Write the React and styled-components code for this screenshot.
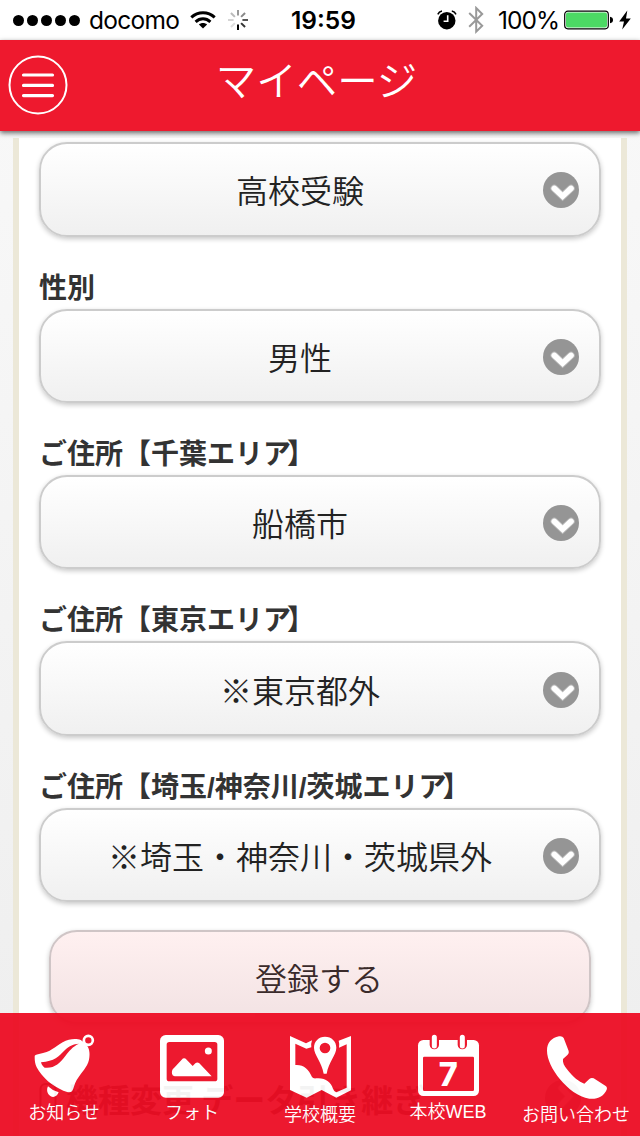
import React from 'react';
import styled, { createGlobalStyle } from 'styled-components';

const GlobalStyle = createGlobalStyle`
  * { box-sizing: border-box; }
  body { margin: 0; background: #fff; }
`;

const jp = `"Noto Sans CJK JP", sans-serif`;

const Screen = styled.div`
  position: relative;
  display: flex;
  flex-direction: column;
  width: 640px;
  height: 1136px;
  overflow: hidden;
  font-family: ${jp};
  background: linear-gradient(#f9f9f9, #eee);
`;

const StatusBar = styled.div`
  display: grid;
  grid-template-columns: 291px 66px 1fr;
  align-items: center;
  height: 40px;
  flex: none;
  background: #fff;
  color: #000;
  font: 400 24.5px/40px Inter, sans-serif;
`;
const StatusGroup = styled.div`
  display: flex;
  align-items: center;
  height: 40px;
  padding-left: ${(p) => p.$inset || 0}px;
  svg { flex: none; display: block; }
`;
const Dots = styled.div`
  display: flex;
  gap: 3px;
  margin: 1px 9px 0 13px;
`;
const Dot = styled.i`
  width: 11px;
  height: 11px;
  border-radius: 50%;
  background: #000;
`;
const StatusText = styled.span`
  width: ${(p) => p.$w}px;
  flex: none;
  white-space: nowrap;
  letter-spacing: ${(p) => p.$ls || 0}px;
  font-weight: ${(p) => p.$weight || 400};
`;
const Gap = styled.span`
  flex: none;
  width: ${(p) => p.$w}px;
`;

const Header = styled.header`
  position: relative;
  z-index: 1;
  display: grid;
  grid-template-columns: 60px 1fr 60px;
  height: 91px;
  flex: none;
  padding: 0 8px;
  background: #ee192e;
  box-shadow: 0 2px 5px rgba(0, 0, 0, 0.6);
`;
const MenuButton = styled.button`
  width: 60px;
  height: 60px;
  margin-top: 15px;
  padding: 0;
  border: 0;
  background: none;
  svg { display: block; }
`;
const Title = styled.h1`
  margin: 0;
  color: #fff;
  font-size: 40.5px;
  font-weight: 350;
  line-height: 78px;
  text-align: center;
  padding-right: 7px;
`;

const Panel = styled.main`
  flex: 1;
  margin: 7px 13px 0;
  padding: 4.2px 20px 0;
  border: solid #ece8d8;
  border-width: 0 6px;
  background: #fff;
`;
const Label = styled.label`
  display: block;
  height: 40px;
  margin-top: 32px;
  color: #333;
  font-size: 28px;
  font-weight: 700;
  line-height: 34px;
  white-space: nowrap;
`;
const Slash = styled.span`
  font-family: "Liberation Sans", sans-serif;
`;
const Close = styled.span`
  margin-left: -4px;
`;
const Select = styled.div`
  display: grid;
  grid-template-columns: 1fr 36px;
  align-items: center;
  height: 94.4px;
  padding: 0 20px 0 0;
  border: 2px solid #ccc;
  border-radius: 28px;
  background: linear-gradient(#fff, #f0f0f0);
  box-shadow: 0 2px 5px rgba(0, 0, 0, 0.22);
  svg { display: block; margin-top: 2px; }
`;
const Value = styled.span`
  padding-left: 16px;
  color: #222;
  font-size: 32px;
  font-weight: 350;
  line-height: 48px;
  text-align: center;
  white-space: nowrap;
  text-shadow: 0 2px 0 #f3f3f3;
`;
const Submit = styled.button`
  display: block;
  width: 542px;
  height: 94px;
  margin: 28px 10px 0;
  padding: 0 2px 0 0;
  border: 2px solid #cfc5c6;
  border-radius: 28px;
  background: linear-gradient(#fff0f0, #f2e2e3);
  box-shadow: 0 2px 5px rgba(0, 0, 0, 0.22);
  color: #3a2a2a;
  font: 350 32px/48px ${jp};
`;
const TransferRow = styled.div`
  display: grid;
  grid-template-columns: 27px 1fr 36px;
  align-items: center;
  margin-top: 50px;
  padding-right: 20px;
  height: 48px;
  color: #333;
  font-size: 32px;
  font-weight: 700;
  line-height: 48px;
  white-space: nowrap;
  svg { display: block; }
`;

const TabBar = styled.nav`
  position: absolute;
  left: 0;
  right: 0;
  bottom: 0;
  z-index: 2;
  display: grid;
  grid-template-columns: repeat(5, 128px);
  height: 123px;
  background: #ed0c23;
  opacity: 0.945;
`;
const Tab = styled.a`
  display: flex;
  flex-direction: column;
  align-items: center;
  color: #fff;
  svg { display: block; flex: none; }
`;
const TabLabel = styled.span`
  margin-top: ${(p) => p.$drop || 0}px;
  font-size: 18px;
  font-weight: 350;
  line-height: 22px;
  font-family: ${(p) => (p.$latin ? `"Liberation Sans", ${jp}` : jp)};
  white-space: nowrap;
`;

const Chevron = ({ right }) => (
  <svg width="36" height="36" viewBox="0 0 36 36">
    <circle cx="18" cy="18" r="18" fill="#959595" />
    <g fill="none" stroke="#fff" strokeLinecap="round" transform={right ? 'rotate(-90 18 18)' : undefined}>
      <path d="M11.3 16.4 19.6 24.2 28 16.4" strokeWidth="7.4" strokeOpacity=".35" />
      <path d="M11.3 16.4 19.6 24.2 28 16.4" strokeWidth="5.6" />
    </g>
  </svg>
);

const Wifi = () => (
  <svg width="26" height="18" viewBox="0 0 26 18">
    <g fill="none" stroke="#000" strokeWidth="3">
      <path d="M1.3 6.3C8 .1 18 .1 24.7 6.3" />
      <path d="M5.6 10.8C10 6.8 16 6.8 20.4 10.8" />
    </g>
    <path d="M13 17.4 8.9 13.4C11.2 11.4 14.8 11.4 17.1 13.4Z" />
  </svg>
);
const shades = ['#999', '#888', '#555', '#333', '#000', '#ddd', '#d5d5d5', '#bbb'];
const Spinner = () => (
  <svg width="20" height="20" viewBox="0 0 20 20">
    {shades.map((shade, i) => (
      <path key={i} d="M10 0V5.6" stroke={shade} strokeWidth="2" transform={`rotate(${i * 45} 10 10)`} />
    ))}
  </svg>
);
const Alarm = () => (
  <svg width="20" height="20" viewBox="0 0 20 20">
    <circle cx="9.8" cy="10.7" r="8.7" />
    <path d="M.8 4.4Q2 1.6 5 1M19 4.4Q17.8 1.6 14.8 1" fill="none" stroke="#000" strokeWidth="1.5" />
    <path d="M10.7 5.2V11.3H6.6" fill="none" stroke="#fff" strokeWidth="1.6" />
  </svg>
);
const Bluetooth = () => (
  <svg width="17" height="28" viewBox="0 0 17 28">
    <path d="M1.2 7 14.2 19.7 8.2 25.6V2L14.2 8 1.2 20.8" fill="none" stroke="#999" strokeWidth="2" />
  </svg>
);
const Battery = () => (
  <svg width="50" height="20" viewBox="0 0 50 20">
    <rect x=".7" y="1.2" width="43.6" height="17.6" rx="3.2" fill="#fff" stroke="#000" strokeWidth="1.2" />
    <rect x="2" y="2.6" width="41" height="14.8" rx="1.8" fill="#4cd964" />
    <path d="M46 6.7Q49 7.3 49 10T46 13.3Z" />
  </svg>
);
const Bolt = () => (
  <svg width="12" height="20" viewBox="0 0 12 20">
    <path d="M8.3 .6 .2 11.4H5L3.2 19.6 11.8 8.4H7Z" />
  </svg>
);

const TabIcon = ({ x, children }) => (
  <svg width="128" height="87" viewBox={`${x} 39 384 261`} fill="#fff">
    {children}
  </svg>
);
const RED = '#ed0c23';
const Bell = () => (
  <TabIcon x={0}>
    <circle cx="265" cy="121" r="13.5" fill="none" stroke="#fff" strokeWidth="8" />
    <path d="M104 171C103 165 108 164 117 162C153 157 164 140 188 127C207 116 229 115 242 120L256 130C268 143 271 159 267 179C262 201 245 216 230 240C222 254 222 265 216 274C210 279 200 276 190 272C155 257 127 233 110 202C105 192 104 182 104 171Z" />
    <path d="M123 187C164 184 176 169 195 150C209 137 220 132 237 131C218 139 207 154 196 168C179 190 163 206 134 203C128 199 125 194 123 187Z" fill={RED} />
    <path d="M144 259Q157 272 176 277C171 290 160 294 151 288C141 281 139 269 144 259Z" />
  </TabIcon>
);
const Photo = () => (
  <TabIcon x={384}>
    <rect x="480" y="105" width="192" height="188" rx="17" />
    <rect x="500" y="126" width="152" height="118" rx="8" fill={RED} />
    <circle cx="625" cy="153" r="10.5" />
    <path d="M516 221Q514 210 522 204L545 179Q552 171 560 179L578 198L586 190Q592 185 598 190L635 229H524Q517 228 516 221Z" />
  </TabIcon>
);
const MapPin = () => (
  <TabIcon x={138}>
    <path d="M240 108 288 130 306 121Q302 133 304 142L289 146 256 131V195C280 193 296 207 306 231Q309 236 318 235C345 232 363 246 369 266Q371 273 379 277L410 263V133L387 143Q389 132 386 122L423 108V271L379 293 335 270 290 293 240 270Z" />
    <path fillRule="evenodd" d="M345 110C365 110 379 124 379 143C379 164 356 186 350 221H341C335 186 312 164 312 143C312 124 326 110 345 110ZM345 128A16 16 0 1 0 345 160A16 16 0 1 0 345 128Z" />
  </TabIcon>
);
const DayNumber = styled.text`
  font: 800 97px Inter, sans-serif;
`;
const Calendar = () => (
  <TabIcon x={-108}>
    <rect x="-6" y="120" width="183" height="168" rx="16" />
    <rect x="9" y="170" width="153" height="103" rx="4" fill={RED} />
    <path d="M43 112V134M127 112V134" stroke={RED} strokeWidth="28" strokeLinecap="round" />
    <path d="M43 112V138M127 112V138" stroke="#fff" strokeWidth="15" strokeLinecap="round" />
    <DayNumber x="85" y="258" textAnchor="middle">7</DayNumber>
  </TabIcon>
);
const Phone = () => (
  <TabIcon x={276}>
    <path d="M417 109Q427 107 431 114L446 153Q448 160 443 164L429 177C427 187 433 198 441 208C459 231 477 246 493 251L508 237Q514 232 521 235L556 257Q563 261 560 269C552 288 532 299 508 296C475 291 444 267 420 238C397 209 381 178 381 152C381 128 394 114 417 109Z" />
  </TabIcon>
);

const areas = [
  { label: '性別', value: '男性' },
  { label: <>ご住所【千葉エリア<Close>】</Close></>, value: '船橋市' },
  { label: <>ご住所【東京エリア<Close>】</Close></>, value: '※東京都外' },
  {
    label: <>ご住所【埼玉<Slash>/</Slash>神奈川<Slash>/</Slash>茨城エリア<Close>】</Close></>,
    value: '※埼玉・神奈川・茨城県外',
  },
];

const tabs = [
  { label: 'お知らせ', Icon: Bell },
  { label: 'フォト', Icon: Photo },
  { label: '学校概要', Icon: MapPin, drop: 2 },
  { label: '本校WEB', Icon: Calendar, latin: true, drop: 1 },
  { label: 'お問い合わせ', Icon: Phone, drop: 2 },
];

const SelectBox = ({ children }) => (
  <Select>
    <Value>{children}</Value>
    <Chevron />
  </Select>
);

export default function App() {
  return (
    <>
      <GlobalStyle />
      <Screen>
        <StatusBar>
          <StatusGroup>
            <Dots>{[0, 1, 2, 3, 4].map((i) => <Dot key={i} />)}</Dots>
            <StatusText $w={101} $ls={-0.7}>docomo</StatusText>
            <Wifi />
            <Gap $w={12} />
            <Spinner />
          </StatusGroup>
          <StatusText $w={66} $weight={600}>19:59</StatusText>
          <StatusGroup $inset={80}>
            <Alarm />
            <Gap $w={11} />
            <Bluetooth />
            <Gap $w={13} />
            <StatusText $w={66} $ls={-1}>100%</StatusText>
            <Battery />
            <Gap $w={5} />
            <Bolt />
          </StatusGroup>
        </StatusBar>
        <Header>
          <MenuButton aria-label="menu">
            <svg width="60" height="60" viewBox="0 0 60 60" fill="none" stroke="#fff">
              <circle cx="30" cy="30" r="28.5" strokeWidth="2" />
              <path d="M15.5 20H44.5M15.5 30.4H44.5M15.5 40.6H44.5" strokeWidth="3.2" strokeLinecap="round" />
            </svg>
          </MenuButton>
          <Title>マイページ</Title>
        </Header>
        <Panel>
          <SelectBox>高校受験</SelectBox>
          {areas.map((a, i) => (
            <React.Fragment key={i}>
              <Label>{a.label}</Label>
              <SelectBox>{a.value}</SelectBox>
            </React.Fragment>
          ))}
          <Submit>登録する</Submit>
          <TransferRow>
            <svg width="18" height="34" viewBox="0 0 18 34" fill="none" stroke="#333" strokeWidth="2">
              <rect x="1.5" y="3" width="15" height="28" rx="5" />
            </svg>
            <span>機種変更 データ引き継ぎ</span>
            <Chevron right />
          </TransferRow>
        </Panel>
        <TabBar>
          {tabs.map(({ label, Icon, drop, latin }) => (
            <Tab key={label}>
              <Icon />
              <TabLabel $drop={drop} $latin={latin}>{label}</TabLabel>
            </Tab>
          ))}
        </TabBar>
      </Screen>
    </>
  );
}
